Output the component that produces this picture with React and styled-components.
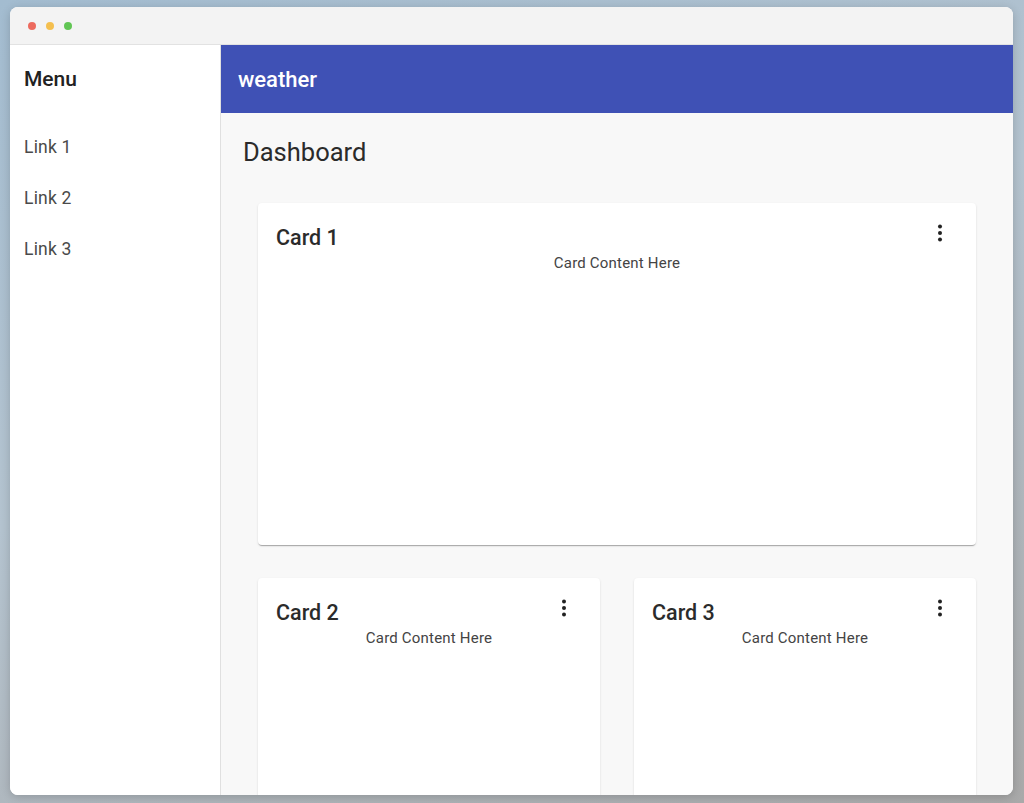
import React from 'react'
import styled, { createGlobalStyle } from 'styled-components'

const GlobalStyle = createGlobalStyle`
  html, body {
    margin: 0;
    padding: 0;
    height: 100%;
  }
  body {
    font-family: Roboto, "Liberation Sans", sans-serif;
    background: linear-gradient(160deg, #a3bcd0 0%, #b4c3cf 45%, #a9a9a9 100%);
  }
  #root {
    height: 100%;
  }
`

const Page = styled.div`
  height: 803px;
  box-sizing: border-box;
  padding: 7px 11px 8px 10px;
  display: flex;
`

const Window = styled.div`
  flex: 1;
  display: flex;
  flex-direction: column;
  border-radius: 8px;
  overflow: hidden;
  background: #fff;
  box-shadow: 0 2px 10px rgba(0, 0, 0, 0.18);
`

const TitleBar = styled.div`
  height: 37px;
  flex-shrink: 0;
  background: #f3f3f3;
  border-bottom: 1px solid #e2e2e2;
  display: flex;
  align-items: center;
  gap: 10px;
  padding-left: 18px;
`

const Dot = styled.span`
  width: 8px;
  height: 8px;
  border-radius: 50%;
  background: ${p => p.color};
`

const Body = styled.div`
  flex: 1;
  display: flex;
  min-height: 0;
`

const Sidebar = styled.nav`
  width: 211px;
  flex-shrink: 0;
  background: #fff;
  border-right: 1px solid #e0e0e0;
  padding: 22px 0 0 14px;
  box-sizing: border-box;
`

const MenuTitle = styled.h2`
  margin: 0 0 46px;
  font-size: 21px;
  font-weight: 500;
  color: #222;
  line-height: 24px;
`

const NavLink = styled.a`
  display: block;
  font-size: 17.5px;
  letter-spacing: 0.2px;
  color: #4a4a4a;
  text-decoration: none;
  line-height: 20px;
  margin-bottom: 31px;
`

const Main = styled.main`
  flex: 1;
  display: flex;
  flex-direction: column;
  background: #f8f8f8;
  min-width: 0;
  overflow: hidden;
`

const AppBar = styled.header`
  height: 68px;
  flex-shrink: 0;
  background: #3f51b5;
  display: flex;
  align-items: center;
  padding-left: 17px;
  color: #fff;
  font-size: 22px;
  font-weight: 500;
`

const Content = styled.div`
  padding: 23px 37px 0 22px;
`

const PageTitle = styled.h1`
  margin: 0 0 35px;
  font-size: 25.5px;
  font-weight: 400;
  color: #2b2b2b;
  line-height: 32px;
`

const Grid = styled.div`
  display: grid;
  grid-template-columns: 1fr 1fr;
  column-gap: 34px;
  row-gap: 33px;
  padding-left: 15px;
`

const Card = styled.section`
  grid-column: ${p => (p.wide ? '1 / span 2' : 'auto')};
  height: 342px;
  background: #fff;
  border-radius: 4px;
  box-shadow: 0 2px 1px -1px rgba(0, 0, 0, 0.2), 0 1px 1px 0 rgba(0, 0, 0, 0.12),
    0 1px 3px 0 rgba(0, 0, 0, 0.08);
  padding: 22px 18px 0 18px;
  box-sizing: border-box;
`

const CardHeader = styled.div`
  display: flex;
  justify-content: space-between;
  align-items: flex-start;
`

const CardTitle = styled.h3`
  margin: 0;
  font-size: 21.5px;
  font-weight: 500;
  color: #2b2b2b;
  line-height: 26px;
`

const MoreButton = styled.button`
  border: none;
  background: none;
  padding: 0;
  width: 24px;
  height: 24px;
  margin-top: -4px;
  margin-right: 6px;
  display: flex;
  align-items: center;
  justify-content: center;
  color: #222;
`

const CardText = styled.p`
  margin: 2px 0 0;
  text-align: center;
  font-size: 15px;
  letter-spacing: 0.2px;
  color: #444;
  line-height: 20px;
`

const MoreIcon = () => (
  <svg width="24" height="24" viewBox="0 0 24 24" fill="currentColor">
    <circle cx="12" cy="5.5" r="2" />
    <circle cx="12" cy="12" r="2" />
    <circle cx="12" cy="18.5" r="2" />
  </svg>
)

const DashCard = ({ title, wide }) => (
  <Card wide={wide}>
    <CardHeader>
      <CardTitle>{title}</CardTitle>
      <MoreButton aria-label="more">
        <MoreIcon />
      </MoreButton>
    </CardHeader>
    <CardText>Card Content Here</CardText>
  </Card>
)

export default function App() {
  return (
    <>
      <GlobalStyle />
      <Page>
        <Window>
          <TitleBar>
            <Dot color="#ec6a5e" />
            <Dot color="#f4bf4f" />
            <Dot color="#61c554" />
          </TitleBar>
          <Body>
            <Sidebar>
              <MenuTitle>Menu</MenuTitle>
              <NavLink href="#">Link 1</NavLink>
              <NavLink href="#">Link 2</NavLink>
              <NavLink href="#">Link 3</NavLink>
            </Sidebar>
            <Main>
              <AppBar>weather</AppBar>
              <Content>
                <PageTitle>Dashboard</PageTitle>
                <Grid>
                  <DashCard title="Card 1" wide />
                  <DashCard title="Card 2" />
                  <DashCard title="Card 3" />
                </Grid>
              </Content>
            </Main>
          </Body>
        </Window>
      </Page>
    </>
  )
}
